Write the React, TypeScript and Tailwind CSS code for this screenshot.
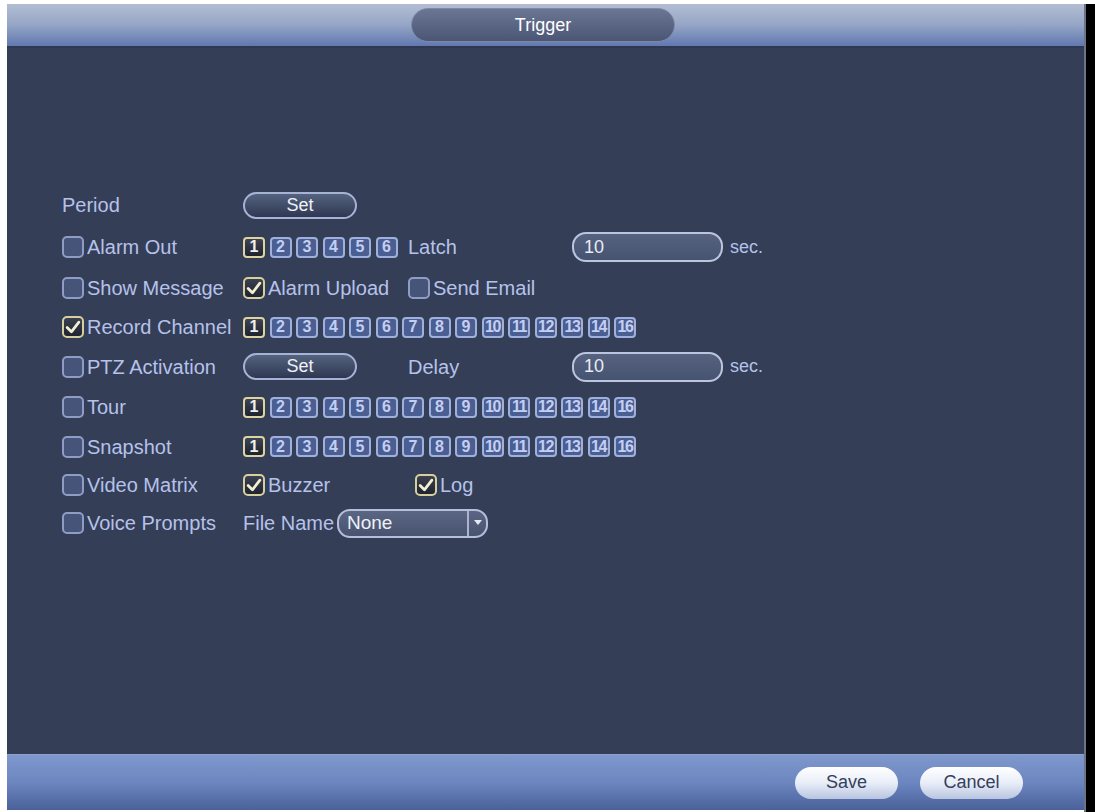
import React from 'react';

const FONT = { fontFamily: '"Liberation Sans", Arial, sans-serif' };

function Check({ checked = false, className = '' }: { checked?: boolean; className?: string }) {
  return (
    <span
      className={`inline-flex w-[22px] h-[22px] shrink-0 items-center justify-center rounded-[5px] border-2 ${
        checked
          ? 'border-[#d8d09c] bg-gradient-to-b from-[#3b4150] to-[#1f2432]'
          : 'border-[#8f9dc6] bg-[#46547a]'
      } ${className}`}
    >
      {checked && (
        <svg width="16" height="14" viewBox="0 0 15 13">
          <polyline points="2,7 6,11 13,2" fill="none" stroke="#f4eed2" strokeWidth="2.6" strokeLinecap="round" strokeLinejoin="round" />
        </svg>
      )}
    </span>
  );
}

function Channels({ count }: { count: number }) {
  const labels = Array.from({ length: count }, (_, i) => (i === count - 1 && count > 6 ? '16' : String(i + 1)));
  return (
    <div className="flex gap-[4.5px]">
      {labels.map((n, i) => (
        <span
          key={i}
          className={`flex w-[22px] h-[21px] items-center justify-center rounded-[4px] border-2 text-[16px] font-bold leading-none ${
            n.length > 1 ? 'tracking-[-1.5px]' : ''
          } ${
            i === 0
              ? 'border-[#dcd5a2] bg-gradient-to-b from-[#3e4454] to-[#1e2331] text-[#f2f2ea]'
              : 'border-[#9fb0dc] bg-[#4b5e92] text-[#c3cff2]'
          }`}
        >
          {n}
        </span>
      ))}
    </div>
  );
}

function SetButton() {
  return (
    <button className="flex w-[114px] h-[27px] items-center justify-center rounded-full border-2 border-[#a6b3d6] bg-gradient-to-b from-[#55637f] to-[#2f3852] text-[18px] text-[#eef1f8]">
      Set
    </button>
  );
}

function SecInput() {
  return (
    <div className="flex items-center">
      <div className="flex w-[151px] h-[30px] items-center rounded-[14px] border-2 border-[#bcc5df] bg-gradient-to-b from-[#56627f] to-[#465371] pl-[10px] text-[18px] text-[#e8ecf6]">
        10
      </div>
      <span className="ml-[7px] text-[18px] text-[#b6c2ea]">sec.</span>
    </div>
  );
}

function Label({ children, checked, box = true }: { children: React.ReactNode; checked?: boolean; box?: boolean }) {
  return (
    <div className="flex items-center gap-[3px]">
      {box && <Check checked={checked} />}
      <span className="whitespace-nowrap">{children}</span>
    </div>
  );
}

function Row({ h, c1, c2, c3, c4 }: { h: string; c1: React.ReactNode; c2?: React.ReactNode; c3?: React.ReactNode; c4?: React.ReactNode }) {
  return (
    <div className={`flex items-center ${h}`}>
      <div className="w-[181px] shrink-0">{c1}</div>
      <div className="w-[165px] shrink-0">{c2}</div>
      <div className="w-[164px] shrink-0">{c3}</div>
      <div>{c4}</div>
    </div>
  );
}

export default function App() {
  return (
    <div className="w-[1095px] h-[812px] bg-white flex overflow-hidden" style={FONT}>
      <div className="ml-[7px] mt-[4px] w-[1077px] h-[806px] flex flex-col">
        {/* Title bar */}
        <div className="h-[44px] shrink-0 flex items-center justify-center bg-gradient-to-b from-[#b3bed2] via-[#95a5c6] to-[#6178b0] border-b-2 border-[#2e3850]">
          <div className="ml-[-5px] flex w-[264px] h-[34px] items-center justify-center rounded-full border border-[#7d89a6] bg-gradient-to-b from-[#6a7692] to-[#4b5675] text-[18px] text-white">
            Trigger
          </div>
        </div>

        {/* Body */}
        <div className="flex-1 bg-[#343e57] pl-[55px] pt-[136px] text-[20px] text-[#b6c2ea]">
          <Row h="h-[42px]" c1={<span>Period</span>} c2={<SetButton />} />
          <Row
            h="h-[42px]"
            c1={<Label>Alarm Out</Label>}
            c2={<Channels count={6} />}
            c3={<span>Latch</span>}
            c4={<SecInput />}
          />
          <Row
            h="h-[40px]"
            c1={<Label>Show Message</Label>}
            c2={<Label checked>Alarm Upload</Label>}
            c3={<Label>Send Email</Label>}
          />
          <div className="flex items-center h-[38px]">
            <div className="w-[181px] shrink-0">
              <Label checked>Record Channel</Label>
            </div>
            <Channels count={15} />
          </div>
          <Row
            h="h-[41px]"
            c1={<Label>PTZ Activation</Label>}
            c2={<SetButton />}
            c3={<span>Delay</span>}
            c4={<SecInput />}
          />
          <div className="flex items-center h-[40px]">
            <div className="w-[181px] shrink-0">
              <Label>Tour</Label>
            </div>
            <Channels count={15} />
          </div>
          <div className="flex items-center h-[39px]">
            <div className="w-[181px] shrink-0">
              <Label>Snapshot</Label>
            </div>
            <Channels count={15} />
          </div>
          <Row
            h="h-[38px]"
            c1={<Label>Video Matrix</Label>}
            c2={<Label checked>Buzzer</Label>}
            c3={
              <div className="ml-[7px]">
                <Label checked>Log</Label>
              </div>
            }
          />
          <div className="flex items-center h-[38px]">
            <div className="w-[181px] shrink-0">
              <Label>Voice Prompts</Label>
            </div>
            <span className="w-[94px] whitespace-nowrap">File Name</span>
            <div className="flex w-[151px] h-[29px] items-center rounded-[13px] border-2 border-[#b5bfdb] bg-gradient-to-b from-[#5a6683] to-[#47536f] text-[#eef1f8]">
              <span className="flex-1 pl-[8px] text-[19px]">None</span>
              <span className="flex h-full w-[19px] items-center justify-center border-l-2 border-[#aab4d0]">
                <svg width="8" height="6" viewBox="0 0 8 6">
                  <polygon points="0,0 8,0 4,5" fill="#e6eaf5" />
                </svg>
              </span>
            </div>
          </div>
        </div>

        {/* Footer */}
        <div className="h-[56px] shrink-0 flex items-center justify-end gap-[22px] pr-[61px] border-t border-[#8aa1d2] bg-gradient-to-b from-[#7f98cd] via-[#6c86c0] to-[#4a6199]">
          <button className="flex w-[103px] h-[32px] items-center justify-center rounded-full bg-gradient-to-b from-[#ffffff] via-[#e8edf7] to-[#b9c5e0] text-[18px] text-[#34405c]">
            Save
          </button>
          <button className="flex w-[103px] h-[32px] items-center justify-center rounded-full bg-gradient-to-b from-[#ffffff] via-[#e8edf7] to-[#b9c5e0] text-[18px] text-[#34405c]">
            Cancel
          </button>
        </div>
      </div>
      <div className="mt-[4px] w-[2px] h-[808px] bg-[#6d7486]" />
      <div className="mt-[4px] flex-1 h-[808px] bg-black" />
    </div>
  );
}
